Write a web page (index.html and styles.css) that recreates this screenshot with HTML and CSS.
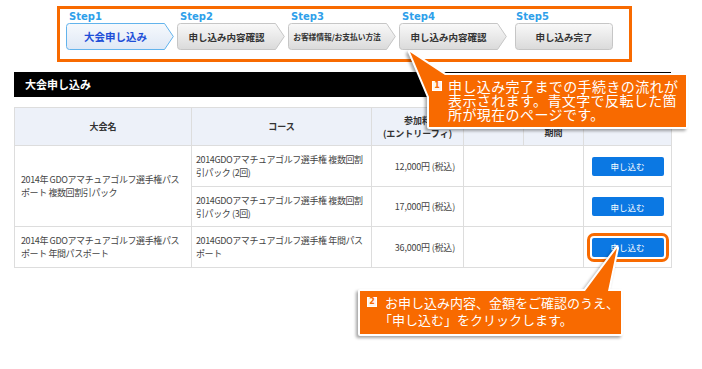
FILE: index.html
```html
<!DOCTYPE html>
<html lang="ja">
<head>
<meta charset="utf-8">
<link rel="stylesheet" href="styles.css">
</head>
<body>
<div class="steps">
  <div class="step active">
    <div class="step-label">Step1</div>
    <div class="shape">
      <svg viewBox="0 0 108 27"><defs><linearGradient id="ga" x1="0" y1="0" x2="0" y2="1"><stop offset="0" stop-color="#f6f9fd"/><stop offset="1" stop-color="#dfe8f5"/></linearGradient></defs><path d="M3.5,0.5 H98.5 L107.3,13.5 L98.5,26.5 H3.5 Q0.5,26.5 0.5,23.5 V3.5 Q0.5,0.5 3.5,0.5 Z" fill="url(#ga)" stroke="#62b3ec"/></svg>
      <span>大会申し込み</span>
    </div>
  </div>
  <div class="step">
    <div class="step-label">Step2</div>
    <div class="shape">
      <svg viewBox="0 0 108 27"><defs><linearGradient id="gg" x1="0" y1="0" x2="0" y2="1"><stop offset="0" stop-color="#f9f9f9"/><stop offset="1" stop-color="#dadada"/></linearGradient></defs><path d="M3.5,0.5 H98.5 L107.3,13.5 L98.5,26.5 H3.5 Q0.5,26.5 0.5,23.5 V3.5 Q0.5,0.5 3.5,0.5 Z" fill="url(#gg)" stroke="#c6c6c6"/></svg>
      <span>申し込み内容確認</span>
    </div>
  </div>
  <div class="step step3">
    <div class="step-label">Step3</div>
    <div class="shape">
      <svg viewBox="0 0 108 27"><path d="M3.5,0.5 H98.5 L107.3,13.5 L98.5,26.5 H3.5 Q0.5,26.5 0.5,23.5 V3.5 Q0.5,0.5 3.5,0.5 Z" fill="url(#gg)" stroke="#c6c6c6"/></svg>
      <span>お客様情報/お支払い方法</span>
    </div>
  </div>
  <div class="step step4">
    <div class="step-label">Step4</div>
    <div class="shape">
      <svg viewBox="0 0 108 27"><path d="M3.5,0.5 H98.5 L107.3,13.5 L98.5,26.5 H3.5 Q0.5,26.5 0.5,23.5 V3.5 Q0.5,0.5 3.5,0.5 Z" fill="url(#gg)" stroke="#c6c6c6"/></svg>
      <span>申し込み内容確認</span>
    </div>
  </div>
  <div class="step step-last">
    <div class="step-label">Step5</div>
    <div class="shape">
      <svg viewBox="0 0 98 27"><rect x="0.5" y="0.5" width="97" height="26" rx="3" fill="url(#gg)" stroke="#c6c6c6"/></svg>
      <span>申し込み完了</span>
    </div>
  </div>
</div>

<section class="section">
  <h2 class="bar">大会申し込み</h2>
  <table class="entry">
    <colgroup>
      <col class="c-name"><col class="c-course"><col class="c-price"><col class="c-a"><col class="c-b"><col class="c-act">
    </colgroup>
    <thead>
      <tr>
        <th>大会名</th>
        <th>コース</th>
        <th>参加料<br>(エントリーフィ)</th>
        <th></th>
        <th><span class="low">期間</span></th>
        <th></th>
      </tr>
    </thead>
    <tbody>
      <tr class="r1">
        <td rowspan="2" class="name">2014年 GDOアマチュアゴルフ選手権パス<br>ポート 複数回割引パック</td>
        <td class="course">2014GDOアマチュアゴルフ選手権 複数回割<br>引パック (2回)</td>
        <td class="price">12,000円 (税込)</td>
        <td colspan="2"></td>
        <td class="act"><button class="btn">申し込む</button></td>
      </tr>
      <tr class="r2">
        <td class="course">2014GDOアマチュアゴルフ選手権 複数回割<br>引パック (3回)</td>
        <td class="price">17,000円 (税込)</td>
        <td colspan="2"></td>
        <td class="act"><button class="btn">申し込む</button></td>
      </tr>
      <tr class="r3">
        <td class="name">2014年 GDOアマチュアゴルフ選手権パス<br>ポート 年間パスポート</td>
        <td class="course">2014GDOアマチュアゴルフ選手権 年間パス<br>ポート</td>
        <td class="price">36,000円 (税込)</td>
        <td colspan="2"></td>
        <td class="act"><button class="btn btn-hl">申し込む</button></td>
      </tr>
    </tbody>
  </table>
</section>

<svg class="overlay" viewBox="0 0 702 369" width="702" height="369">
  <path class="bubble" d="M410,52 L445,75 H686 V127 H429 V97 Z"/>
  <path class="bubble" d="M360,291 H585 L617,248 L608,291 H621 V334 H360 Z"/>
</svg>

<div class="callout callout-1">
  <span class="num">1</span>
  <p class="ctext">申し込み完了までの手続きの流れが<br>表示されます。青文字で反転した箇<br>所が現在のページです。</p>
</div>
<div class="callout callout-2">
  <span class="num">2</span>
  <p class="ctext">お申し込み内容、金額をご確認のうえ、<br><span class="hang">「申し込む」をクリックします。</span></p>
</div>
</body>
</html>
```
FILE: styles.css
```css
* { box-sizing: border-box; }
html, body { margin: 0; padding: 0; }
body {
  width: 702px;
  height: 369px;
  overflow: hidden;
  position: relative;
  background: #fff;
  color: #333;
  font-family: "Noto Sans CJK JP", "Noto Sans", sans-serif;
}

/* steps */
.steps {
  margin: 6px 0 0 57px;
  width: 575px;
  height: 56px;
  border: 3px solid #f86a00;
  padding: 2px 0 0 6px;
  display: flex;
  gap: 3px;
}
.step { width: 108px; display: flex; flex-direction: column; }
.step-last { width: 98px; margin-left: 5px; }
.step-label {
  font-family: "DejaVu Sans", sans-serif;
  font-weight: bold;
  font-size: 10px;
  line-height: 12px;
  height: 12px;
  color: #2e9fea;
  padding-left: 3px;
}
.step-last .step-label { padding-left: 1px; }
.shape { display: grid; height: 27px; }
.shape > * { grid-area: 1 / 1; }
.shape svg { display: block; width: 100%; height: 27px; }
.shape span {
  align-self: center;
  justify-self: center;
  padding-right: 9px;
  font-weight: bold;
  font-size: 9.5px;
  color: #333;
  white-space: nowrap;
}
.step.active .shape span { color: #1e4fd8; font-size: 10.5px; }
.step3 .shape span { font-size: 7.8px; letter-spacing: -0.1px; padding-right: 10px; }
.step-last .shape span { padding-right: 0; }

/* section */
.section { margin: 10px 0 0 14px; width: 657px; }
.bar {
  margin: 0;
  height: 25px;
  background: #000;
  color: #fff;
  font-size: 11px;
  font-weight: bold;
  line-height: 25px;
  padding-left: 11px;
}
.entry {
  margin-top: 10px;
  width: 657px;
  border-collapse: collapse;
  table-layout: fixed;
  font-size: 9px;
}
.c-name { width: 177px; }
.c-course { width: 180px; }
.c-price { width: 92px; }
.c-a { width: 60px; }
.c-b { width: 60px; }
.c-act { width: 88px; }
.entry th, .entry td { border: 1px solid #dddddd; }
.entry th {
  background: #edf1f9;
  font-weight: bold;
  height: 38px;
  line-height: 13px;
  padding: 0;
  color: #333;
}
.entry th .low { display: inline-block; padding-top: 11px; }
.entry td {
  line-height: 13px;
  padding: 0 5px;
  color: #444;
  background: #fff;
  white-space: nowrap;
  letter-spacing: -0.4px;
}
.entry .r1 td, .entry .r3 td { height: 41px; }
.entry .r2 td { height: 40px; }
.entry td.name { padding-left: 6px; }
.entry td.course { padding-left: 4px; }
.entry td.price { text-align: right; padding-right: 8px; letter-spacing: -0.2px; }
.entry td.act { text-align: center; padding: 0; letter-spacing: 0; }
.btn {
  width: 72px;
  height: 19px;
  border: none;
  border-radius: 2px;
  background: #0b78e3;
  color: #fff;
  font-family: "Noto Sans CJK JP", sans-serif;
  font-size: 8.5px;
  padding: 0;
  vertical-align: middle;
}
.btn-hl { outline: 3px solid #f86a00; outline-offset: 2px; }

/* callouts */
.overlay {
  position: absolute;
  left: 0;
  top: 0;
  pointer-events: none;
}
.bubble {
  fill: #f86a00;
  stroke: #fff;
  stroke-width: 4;
  paint-order: stroke;
  stroke-linejoin: round;
  filter: drop-shadow(-2px 2px 1.5px rgba(0, 0, 0, 0.35));
}
.callout {
  position: absolute;
  display: flex;
  align-items: flex-start;
  color: #fff;
}
.callout-1 { left: 429px; top: 75px; width: 257px; height: 52px; padding: 4px 0 0 3px; gap: 6px; }
.callout-2 { left: 360px; top: 291px; width: 261px; height: 43px; padding: 3px 0 0 7px; gap: 8px; }
.num {
  flex: none;
  width: 10px;
  height: 10px;
  margin-top: 2px;
  background: #fff4ec;
  border: 1px solid #fff;
  color: #f86a00;
  font-family: "DejaVu Sans", sans-serif;
  font-weight: bold;
  font-size: 8px;
  line-height: 8px;
  text-align: center;
}
.callout-2 .num { margin-top: 3px; }
.ctext { margin: 0; white-space: nowrap; }
.callout-1 .ctext { font-size: 14px; line-height: 14px; letter-spacing: 0.4px; }
.callout-2 .ctext { font-size: 13px; line-height: 17px; }
.hang { margin-left: -6px; }
```
